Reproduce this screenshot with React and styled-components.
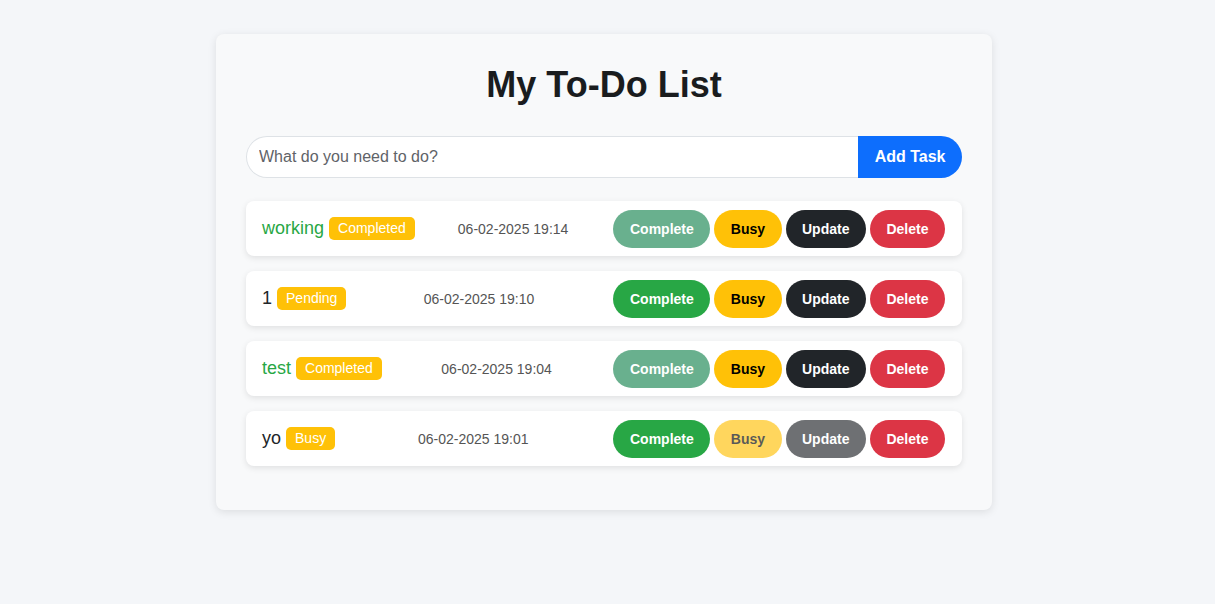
import React from "react";
import styled, { createGlobalStyle, css } from "styled-components";

const GlobalStyle = createGlobalStyle`
  html, body {
    margin: 0;
    padding: 0;
    background: #f4f6f9;
    font-family: "Liberation Sans", Arial, sans-serif;
  }
  * { box-sizing: border-box; }
`;

const Page = styled.div`
  display: flex;
  justify-content: center;
  padding: 34px 7px 40px 0;
`;

const Card = styled.div`
  width: 776px;
  padding: 30px;
  background: #f8f9fa;
  border-radius: 8px;
  box-shadow: 0 2px 8px rgba(0, 0, 0, 0.1);
`;

const Title = styled.h1`
  margin: 0 0 30px;
  text-align: center;
  font-size: 36px;
  font-weight: 700;
  color: #1a1c1e;
`;

const Form = styled.form`
  display: flex;
  height: 42px;
  margin: 0 0 23px;
`;

const Input = styled.input`
  flex: 1;
  height: 100%;
  padding: 0 12px;
  font-family: inherit;
  font-size: 16px;
  color: #212529;
  background: #fff;
  border: 1px solid #dee2e6;
  border-right: none;
  border-radius: 21px 0 0 21px;
  outline: none;
  &::placeholder { color: #5f6368; }
`;

const AddButton = styled.button`
  height: 100%;
  padding: 0 16.5px;
  font-family: inherit;
  font-size: 16px;
  font-weight: 700;
  color: #fff;
  background: #0d6efd;
  border: none;
  border-radius: 0 21px 21px 0;
  cursor: pointer;
`;

const List = styled.ul`
  list-style: none;
  margin: 0 0 14px;
  padding: 0;
  display: flex;
  flex-direction: column;
  gap: 15px;
`;

const Item = styled.li`
  display: flex;
  align-items: center;
  justify-content: space-between;
  height: 55px;
  padding: 0 15px 0 16px;
  background: #fff;
  border-radius: 8px;
  box-shadow: 0 2px 6px rgba(0, 0, 0, 0.1);
`;

const Left = styled.div`
  display: flex;
  align-items: center;
`;

const Name = styled.span`
  font-size: 18px;
  color: ${(p) => (p.$done ? "#28a745" : "#212529")};
`;

const Badge = styled.span`
  margin-left: 5px;
  padding: 3px 9px;
  font-size: 14px;
  line-height: 17px;
  color: #fff;
  background: #ffc107;
  border-radius: 5px;
`;

const DateText = styled.span`
  font-size: 14px;
  color: #555;
`;

const Actions = styled.div`
  display: flex;
  align-items: center;
`;

const variants = {
  complete: css`background: #28a745; color: #fff;`,
  completeDone: css`background: #69b08e; color: #fff;`,
  busy: css`background: #ffc107; color: #000;`,
  update: css`background: #212529; color: #fff;`,
  delete: css`background: #dc3545; color: #fff;`,
};

const ActionButton = styled.button`
  margin: 0 2px;
  padding: 8px 15.5px;
  font-family: inherit;
  font-size: 14px;
  font-weight: 700;
  line-height: 20px;
  border: 1px solid transparent;
  border-radius: 20px;
  cursor: pointer;
  ${(p) => variants[p.$variant]}
  opacity: ${(p) => (p.$faded ? 0.65 : 1)};
`;

const tasks = [
  { name: "working", status: "Completed", date: "06-02-2025 19:14" },
  { name: "1", status: "Pending", date: "06-02-2025 19:10" },
  { name: "test", status: "Completed", date: "06-02-2025 19:04" },
  { name: "yo", status: "Busy", date: "06-02-2025 19:01" },
];

export default function App() {
  return (
    <>
      <GlobalStyle />
      <Page>
        <Card>
          <Title>My To-Do List</Title>
          <Form onSubmit={(e) => e.preventDefault()}>
            <Input placeholder="What do you need to do?" />
            <AddButton type="submit">Add Task</AddButton>
          </Form>
          <List>
            {tasks.map((t) => {
              const done = t.status === "Completed";
              const busy = t.status === "Busy";
              return (
                <Item key={t.name}>
                  <Left>
                    <Name $done={done}>{t.name}</Name>
                    <Badge>{t.status}</Badge>
                  </Left>
                  <DateText>{t.date}</DateText>
                  <Actions>
                    <ActionButton $variant={done ? "completeDone" : "complete"}>Complete</ActionButton>
                    <ActionButton $variant="busy" $faded={busy}>Busy</ActionButton>
                    <ActionButton $variant="update" $faded={busy}>Update</ActionButton>
                    <ActionButton $variant="delete">Delete</ActionButton>
                  </Actions>
                </Item>
              );
            })}
          </List>
        </Card>
      </Page>
    </>
  );
}
